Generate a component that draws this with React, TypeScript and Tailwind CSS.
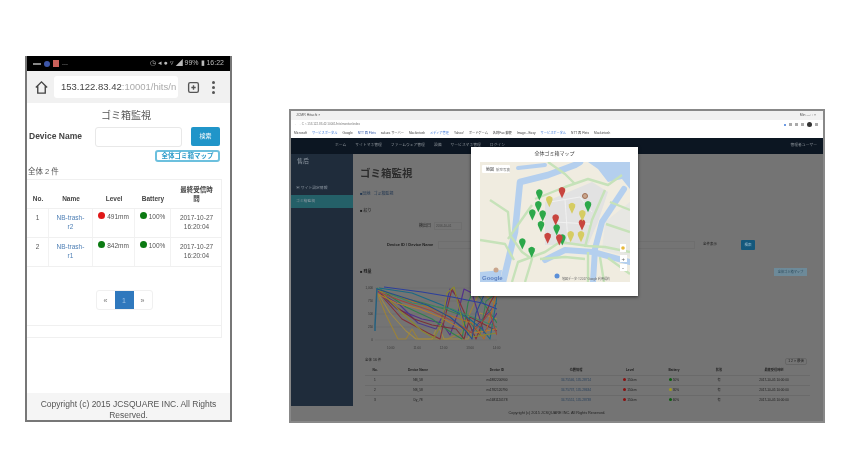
import React from "react";

const FONT = "[font-family:'Liberation_Sans','Noto_Sans_CJK_JP',sans-serif]";

const pins: { x: number; y: number; c: string }[] = [
  ...[[223,155],[220,190],[202,215],[233,218],[228,250],[275,260],[172,302],[200,327],[292,290],[369,190]].map(([x,y]) => ({ x, y, c: "#2ca84a" })),
  ...[[291,148],[272,230],[351,245],[248,285],[283,290]].map(([x,y]) => ({ x, y, c: "#c8453f" })),
  ...[[253,175],[321,195],[352,217],[317,280],[348,280]].map(([x,y]) => ({ x, y, c: "#d6cc62" })),
];

function MapArt() {
  return (
    <svg viewBox="0 0 150 120" className="w-[150px] h-[120px] block">
      <rect width="150" height="120" fill="#f0ece0" />
      <polygon points="65,40 112,20 128,30 118,60 108,83 65,83" fill="#e2e2e2" />
      <polygon points="125,60 150,40 150,95 122,88" fill="#e7e7e3" />
      <polygon points="108,0 150,0 150,27 142,17 128,20 118,7" fill="#b4cfee" />
      <polygon points="0,110 22,108 20,120 0,120" fill="#b4cfee" />
      <g fill="none" stroke="#b4cfee" strokeLinejoin="round" strokeLinecap="round">
        <path d="M23 120 L35 70 L40 20 L68 13 L95 3 L100 0" strokeWidth="6.5" />
        <path d="M38 6 L65 3" strokeWidth="4" />
        <path d="M144 27 L122 60 L115 87 L113 120" strokeWidth="6" />
        <path d="M65 98 L85 88 L113 90 L150 100" strokeWidth="6" />
      </g>
      <g fill="none" stroke="#c6e2b9" strokeWidth="2.4" strokeLinejoin="round">
        <path d="M55 37 L85 25 L108 17 L128 23 L142 13" />
        <path d="M52 43 L28 77" />
        <path d="M10 38 L28 50 L30 73 L42 90 L52 97 L45 120" />
        <path d="M32 120 L38 100 L65 90 L80 80 L108 84 L125 85 L150 90" />
        <path d="M125 28 L112 58 L105 85" />
        <path d="M108 90 L108 120 M120 95 L124 120 M128 96 L150 112" />
        <path d="M68 0 L85 12 L95 22" />
        <path d="M0 78 L25 82 L34 98" />
        <path d="M60 97 L85 95 L105 97" />
        <path d="M130 40 L150 48 M126 62 L150 70" />
      </g>
      <g fill="none" stroke="#f4f4f4" strokeWidth="0.8">
        <path d="M70 40 L100 35 L112 50 M75 60 L110 62 M85 38 L88 80" />
      </g>
      <circle cx="105" cy="34" r="2.5" fill="#c9a58c" stroke="#a06f55" strokeWidth="1" />
      <circle cx="16" cy="108" r="2.5" fill="#c9a58c" />
      <circle cx="77" cy="114" r="2.5" fill="#5a8fd8" />
      {pins.map((p, i) => {
        const x = (p.x - 45) / 3;
        const y = (p.y - 50) / 3;
        return (
          <path key={i} d={`M${x} ${y + 3.5} L${x - 3} ${y - 3} A3.3 3.3 0 1 1 ${x + 3} ${y - 3} Z`} fill={p.c} />
        );
      })}
      <rect x="2" y="3" width="28" height="8" rx="1" fill="#ffffff" />
      <text x="6" y="9" fontSize="4" fill="#333">地図</text>
      <text x="16" y="9" fontSize="3.5" fill="#777">航空写真</text>
      <rect x="140" y="82" width="6" height="8" fill="#fff" />
      <circle cx="143" cy="86" r="1.8" fill="#e8b93a" />
      <rect x="140" y="93" width="7" height="7" fill="#fff" />
      <text x="141.5" y="99" fontSize="6" fill="#666">+</text>
      <rect x="140" y="102" width="7" height="7" fill="#fff" />
      <text x="142" y="108" fontSize="6" fill="#666">-</text>
      <text x="2" y="118" fontSize="6" fill="#5a7fc0" fontWeight="700">Google</text>
      <text x="82" y="118" fontSize="3" fill="#666">地図データ ©2017 Google 利用規約</text>
    </svg>
  );
}

const series: [string, string][] = [
  ["#9c8238", "M5 10 L14 32 L26 56 L34 56 L40 46 L46 56 L75 56 L90 50 L98 30 L108 8 L125 22"],
  ["#a08a44", "M7 12 L18 30 L34 48 L44 56 L60 56 L66 42 L72 56 L96 56 L108 30 L125 36"],
  ["#53308a", "M6 8 L25 26 L50 36 L70 40 L78 52 L86 30 L92 6 L100 10 L112 50 L125 30"],
  ["#4a3a8c", "M8 10 L28 22 L46 40 L64 46 L72 30 L78 6 L84 12 L96 52 L125 20"],
  ["#2f7f4c", "M8 6 L34 24 L60 36 L80 50 L90 56 L96 20 L102 6 L125 40"],
  ["#3b7f52", "M7 7 L26 14 L52 20 L72 26 L94 34 L108 52 L114 18 L125 10"],
  ["#84303a", "M9 12 L30 36 L56 50 L68 56 L74 30 L80 6 L88 20 L104 56 L118 20 L125 8"],
  ["#7a3038", "M8 9 L24 24 L42 36 L60 42 L84 46 L92 56 L98 34 L125 48"],
  ["#b06a28", "M6 7 L40 18 L70 30 L100 40 L112 56 L125 10"],
  ["#b27a30", "M6 11 L24 20 L48 26 L68 34 L86 44 L102 50 L125 46"],
  ["#1a6a86", "M7 5 L40 10 L70 22 L95 34 L110 46 L118 56 L125 14"],
  ["#8a882e", "M6 6 L30 30 L50 48 L62 55 L70 40 L75 10 L82 4 L92 44 L100 54 L125 50"],
  ["#2c3f9c", "M12 4 L50 9 L80 14 L110 20 L125 26"],
  ["#3f8660", "M5 5 L40 20 L80 26 L110 38 L125 44"],
  ["#9c473f", "M6 9 L30 18 L60 28 L85 40 L100 50 L118 30 L125 52"],
  ["#24508a", "M5 6 L30 14 L55 22 L78 34 L94 48 L100 56 L104 30 L112 12 L125 8"],
];

function ChartArt() {
  return (
    <svg viewBox="-10 0 135 62" className="w-[135px] h-[62px] block ml-[2px] shrink-0">
      <g stroke="#666" strokeWidth="0.4">
        <path d="M3 5 H125 M3 18 H125 M3 31 H125 M3 44 H125 M3 57 H125" />
      </g>
      <g fontSize="3" fill="#333" textAnchor="end">
        <text x="1" y="6">1,000</text>
        <text x="1" y="19">750</text>
        <text x="1" y="32">500</text>
        <text x="1" y="45">250</text>
        <text x="1" y="58">0</text>
      </g>
      <g fill="none" strokeWidth="1.1" strokeLinejoin="round">
        {series.map(([c, d], i) => <path key={i} d={d} stroke={c} />)}
        <path d="M5 5 L3 42 L3 48" stroke="#24607f" strokeWidth="1.5" />
      </g>
    </svg>
  );
}

function Dot({ c }: { c: string }) {
  return <span className={`inline-block w-[7px] h-[7px] rounded-full mr-[2px] ${c}`} />;
}

function PhoneRow({ no, name, sub, level, lc }: { no: string; name: string; sub: string; level: string; lc: string }) {
  return (
    <div className="grid grid-cols-[22px_44px_42px_36px_51px] h-[29px] border-b border-[#f0f0f0] text-[6.5px] text-[#555] text-center leading-[9px]">
      <div className="pt-[4px] border-r border-[#f2f2f2]">{no}</div>
      <div className="pt-[4px] border-r border-[#f2f2f2] text-[#4d7fb5]">{name}<br />{sub}</div>
      <div className="pt-[3px] border-r border-[#f2f2f2] whitespace-nowrap"><Dot c={lc} />{level}</div>
      <div className="pt-[3px] border-r border-[#f2f2f2] whitespace-nowrap"><Dot c="bg-[#0b7a12]" />100%</div>
      <div className="pt-[4px]">2017-10-27<br />16:20:04</div>
    </div>
  );
}

function Phone() {
  return (
    <div className="w-[207px] h-[366px] border-2 border-[#777] border-t-0 bg-white flex flex-col overflow-hidden shrink-0">
      <div className="h-[15px] bg-black text-[#bbb] text-[7px] flex items-center px-[6px] justify-between shrink-0">
        <span className="flex items-center gap-[3px]">
          <span className="w-[8px] h-[2px] bg-[#888]" />
          <span className="w-[6px] h-[6px] rounded-full bg-[#3d56a8]" />
          <span className="w-[6px] h-[7px] bg-[#c9605a]" />
          <span>...</span>
        </span>
        <span className="whitespace-nowrap">◷ ◂ ● ▿ ◢ 99% ▮ 16:22</span>
      </div>
      <div className="h-[32px] bg-[#f1f1f1] flex items-center pl-[7px] pr-[6px] shrink-0">
        <svg width="15" height="15" viewBox="0 0 24 24" fill="none" stroke="#444" strokeWidth="2.2"><path d="M3 12 L12 3 L21 12 M6 10 V21 H18 V10" /></svg>
        <div className="ml-[5px] w-[124px] h-[22px] bg-white rounded-[3px] text-[9.5px] leading-[22px] px-[7px] whitespace-nowrap overflow-hidden text-[#444]">
          153.122.83.42<span className="text-[#aaa]">:10001/hits/n</span>
        </div>
        <svg className="ml-[9px]" width="13" height="13" viewBox="0 0 24 24" fill="none" stroke="#555" strokeWidth="2.5"><rect x="3" y="3" width="18" height="18" rx="3" /><path d="M8 12 H16 M12 8 V16" /></svg>
        <div className="ml-[12px] flex flex-col gap-[2px]">
          <span className="w-[3px] h-[3px] bg-[#555] rounded-full" />
          <span className="w-[3px] h-[3px] bg-[#555] rounded-full" />
          <span className="w-[3px] h-[3px] bg-[#555] rounded-full" />
        </div>
      </div>
      <div className="text-center text-[10px] text-[#555] pt-[5px] h-[24px] shrink-0 pr-[5px]">ゴミ箱監視</div>
      <div className="flex items-start pl-[2px] h-[22px] shrink-0">
        <div className="text-[8.5px] font-bold text-[#444] w-[66px] pt-[3px] whitespace-nowrap">Device Name</div>
        <div className="w-[87px] h-[20px] border border-[#e8e8e8] rounded-[3px]" />
        <div className="ml-[9px] w-[29px] h-[19px] bg-[#2095c9] rounded-[2px] text-white text-[6px] text-center leading-[19px]">検索</div>
      </div>
      <div className="flex justify-end pr-[10px] mt-[1px] shrink-0">
        <div className="w-[65px] h-[12px] border-2 border-[#6cc0de] rounded-[3px] text-[#2a9ac8] text-[6.5px] font-bold text-center leading-[8px] whitespace-nowrap">全体ゴミ箱マップ</div>
      </div>
      <div className="text-[7.5px] text-[#555] pl-[1px] pt-[4px] h-[17px] shrink-0">全体 2 件</div>
      <div className="w-[195px] border-r border-b border-[#f0f0f0] h-[147px] shrink-0 flex flex-col">
        <div className="grid grid-cols-[22px_44px_42px_36px_51px] h-[30px] border-y border-[#f0f0f0] text-[6.5px] font-bold text-[#444] text-center items-end pb-[5px] leading-[9px]">
          <div>No.</div><div>Name</div><div>Level</div><div>Battery</div><div>最終受信時<br />間</div>
        </div>
        <PhoneRow no="1" name="NB-trash-" sub="r2" level="491mm" lc="bg-[#e01818]" />
        <PhoneRow no="2" name="NB-trash-" sub="r1" level="842mm" lc="bg-[#0b7a12]" />
        <div className="flex justify-center mt-[23px]">
          <div className="flex h-[20px] w-[57px] border border-[#f0f0f0] rounded-[3px] text-[7px] text-[#777] text-center leading-[19px]">
            <span className="w-[18px]">«</span>
            <span className="w-[19px] bg-[#2f78bd] text-[#9fc4e6]">1</span>
            <span className="w-[18px]">»</span>
          </div>
        </div>
      </div>
      <div className="w-[195px] h-[12px] border-r border-b border-[#f0f0f0] shrink-0" />
      <div className="flex-1" />
      <div className="h-[27px] bg-[#f5f5f5] text-[8.5px] leading-[11px] text-[#555] text-center pt-[6px] px-[10px] overflow-hidden shrink-0">
        Copyright (c) 2015 JCSQUARE INC. All Rights Reserved.
      </div>
    </div>
  );
}

const DESK_COLS = "grid grid-cols-[20px_66px_92px_66px_42px_46px_44px_66px]";

function DeskRow({ no, name, id, pos, lv, bat, batc, st }: { no: string; name: string; id: string; pos: string; lv: string; bat: string; batc: string; st: string }) {
  return (
    <div className={`${DESK_COLS} h-[10px] border-t border-[#6a6a6a] text-[#1c1c1c] text-center leading-[9px] whitespace-nowrap`}>
      <div>{no}</div><div>{name}</div><div>{id}</div><div className="text-[#28405c]">{pos}</div>
      <div><Dot c="!w-[3px] !h-[3px] !mr-[1px] bg-[#8a1010]" />{lv}</div>
      <div><Dot c={`!w-[3px] !h-[3px] !mr-[1px] ${batc}`} />{bat}</div>
      <div>{st}</div><div>2017-10-05 10:00:00</div>
    </div>
  );
}

function Desktop() {
  return (
    <div className="relative w-[536px] h-[314px] border-2 border-[#888] bg-[#747474] flex flex-col overflow-hidden shrink-0">
      <div className="h-[27px] bg-white shrink-0 flex flex-col">
        <div className="h-[9px] bg-[#f1f1f1] flex items-center justify-between px-[5px] text-[3.5px] text-[#555]">
          <span>JCMR Hitachi ×</span><span className="pr-[2px]">Min — □ ×</span>
        </div>
        <div className="h-[9px] flex items-center text-[3px] text-[#777] px-[3px] justify-between">
          <span>← → C ⌂ 153.122.83.42:10001/hits/monitor/index</span>
          <span className="flex items-center gap-[3px] pr-[2px]">
            <span className="w-[2px] h-[2px] rounded-full bg-[#3d78d8]" />
            <span className="w-[3px] h-[3px] bg-[#aaa]" /><span className="w-[3px] h-[3px] bg-[#aaa]" />
            <span className="w-[3px] h-[3px] bg-[#aaa]" />
            <span className="w-[5px] h-[5px] rounded-full bg-[#333]" />
            <span className="w-[3px] h-[3px] bg-[#aaa]" />
          </span>
        </div>
        <div className="h-[9px] flex items-center gap-[5px] px-[3px] text-[3.2px] text-[#444] whitespace-nowrap overflow-hidden">
          <span>Microsoft</span><span className="text-[#3d78d8]">サービスポータル</span><span>Google</span><span className="text-[#2d55a8]">NTT 西 Flets</span><span>sakura サーバー</span><span>Mackintosh</span><span className="text-[#3d78d8]">メディア管理</span><span>Yahoo!</span><span>ボードゲーム</span><span>名刺Fax 郵便</span><span>Image - Easy</span><span className="text-[#3d78d8]">サービスポータル</span><span>NTT 西 Flets</span><span>Mackintosh</span>
        </div>
      </div>
      <div className="h-[16px] bg-[#0c1622] shrink-0 flex items-center text-[3.8px] text-[#8b9299] pl-[44px] gap-[9px] whitespace-nowrap">
        <span>ホーム</span><span>サイトマネ管理</span><span>ファームウェア管理</span><span>設備</span><span>サービスマネ管理</span><span>ログイン</span>
        <span className="ml-auto pr-[6px]">管理者ユーザー</span>
      </div>
      <div className="h-[252px] flex shrink-0">
        <div className="w-[62px] bg-[#1f2c3b] text-[#8f99a3] shrink-0">
          <div className="text-[6px] px-[6px] pt-[3px] h-[28px]">售后</div>
          <div className="text-[3.8px] px-[5px] h-[13px] leading-[13px]">▣ サイト設定情報</div>
          <div className="text-[3.8px] px-[5px] h-[13px] leading-[13px] bg-[#246068]">ゴミ箱監視</div>
        </div>
        <div className="flex-1 min-w-0 pl-[7px] pr-[13px] text-[#1c1c1c] flex flex-col">
          <div className="text-[10.5px] font-bold h-[30px] pt-[12px] leading-[14px] text-[#2c2c2c] shrink-0">ゴミ箱監視</div>
          <div className="text-[4px] h-[19px] pt-[7px] text-[#1f3550] shrink-0">■団地 <span className="ml-[2px]">ゴミ箱監視</span></div>
          <div className="text-[4px] h-[15px] pt-[5px] shrink-0">■ 絞り</div>
          <div className="flex items-center h-[12px] mt-[2px] pl-[59px] text-[4px] shrink-0">
            <span>検出日</span>
            <span className="ml-[3px] w-[28px] h-[8px] border border-[#6e6e6e] text-[3px] text-[#444] pl-[1px] leading-[6px]">2016-10-01</span>
          </div>
          <div className="flex items-center h-[14px] mt-[6px] pl-[27px] text-[4px] shrink-0">
            <span className="font-bold whitespace-nowrap w-[51px]">Device ID / Device Name</span>
            <span className="w-[257px] h-[8px] border border-[#6e6e6e]" />
            <span className="ml-[7px] w-[16px] text-[3.5px] text-center whitespace-nowrap">全件表示</span>
            <span className="ml-[23px] w-[14px] h-[10px] bg-[#14587c] text-[#9fc2d3] text-[3.5px] text-center leading-[10px] rounded-[1px]">検索</span>
          </div>
          <div className="flex justify-between items-center h-[16px] mt-[12px] pr-[3px] text-[4px] shrink-0">
            <span className="font-bold">■ 残量</span>
            <span className="bg-[#6d8a99] text-[#2a4a5c] px-[2px] h-[8px] w-[33px] text-center whitespace-nowrap text-[3.2px] leading-[8px]">全体ゴミ箱マップ</span>
          </div>
          <div className="mt-[3px]"><ChartArt /></div>
          <div className="flex pl-[27px] gap-[19px] text-[3px] text-[#3a3a3a] h-[10px] pt-[1px] shrink-0">
            <span>10:00</span><span>11:00</span><span>12:00</span><span>13:00</span><span>14:00</span>
          </div>
          <div className="flex justify-between items-center h-[10px] pt-[2px] pl-[5px] text-[3.5px] shrink-0">
            <span>全体 16 件</span>
            <span className="border border-[#666] rounded-[2px] px-[2px] leading-[5px] mr-[3px]">1 2 &gt; 最後</span>
          </div>
          <div className="text-[3.2px] pl-[5px]">
            <div className={`${DESK_COLS} h-[10px] font-bold text-center leading-[10px] whitespace-nowrap`}>
              <div>No.</div><div>Device Name</div><div>Device ID</div><div>位置情報</div><div>Level</div><div>Battery</div><div>状態</div><div>最終受信時刻</div>
            </div>
            <DeskRow no="1" name="NB_58" id="ns1882200900" pos="34.75546, 135.28714" lv="150cm" bat="50%" batc="bg-[#0e5e12]" st="有" />
            <DeskRow no="2" name="NS_58" id="ns1782120790" pos="34.75737, 135.28634" lv="150cm" bat="30%" batc="bg-[#a09a20]" st="有" />
            <DeskRow no="3" name="Dy_78" id="ns1681120178" pos="34.75551, 135.28738" lv="150cm" bat="60%" batc="bg-[#0e5e12]" st="有" />
          </div>
        </div>
      </div>
      <div className="flex-1 text-center text-[3.8px] text-[#222] pt-[5px]">Copyright (c) 2015 JCSQUARE INC. All Rights Reserved.</div>
      <div className="absolute left-[180px] top-[36px] w-[167px] h-[149px] bg-white shadow-[0_1px_3px_rgba(0,0,0,0.6)] flex flex-col items-center">
        <div className="text-[5px] text-[#444] h-[15px] leading-[12px] w-full text-center shrink-0">全体ゴミ箱マップ</div>
        <div className="self-start ml-[9px]"><MapArt /></div>
      </div>
    </div>
  );
}

export default function App() {
  return (
    <div className={`w-[850px] h-[470px] bg-white flex items-start overflow-hidden pl-[25px] pt-[56px] blur-[0.7px] ${FONT}`}>
      <Phone />
      <div className="ml-[57px] mt-[53px]"><Desktop /></div>
    </div>
  );
}
